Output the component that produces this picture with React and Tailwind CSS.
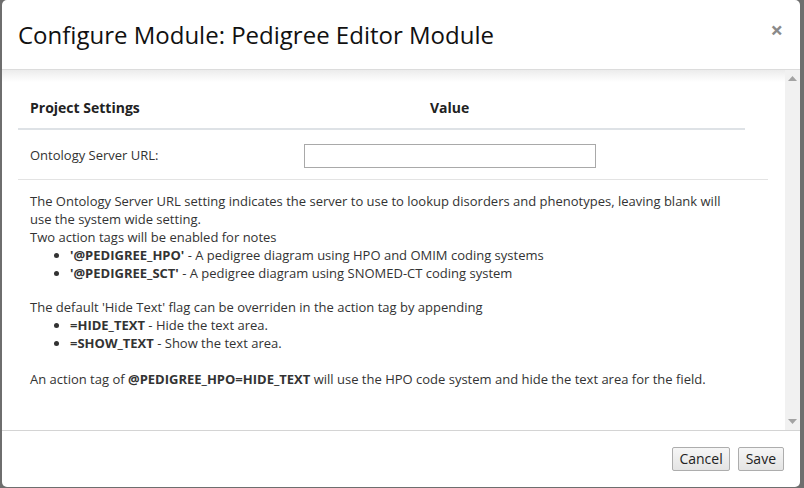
import React from 'react';

const font = { fontFamily: '"Open Sans", "Liberation Sans", sans-serif' };

const Bullet = ({ tag, children }) => (
  <li className="list-disc">
    <b className="font-bold">{tag}</b> - {children}
  </li>
);

const Scrollbar = () => (
  <div className="w-[15px] shrink-0 bg-[#f1f1f1] flex flex-col justify-between items-center py-[6px]">
    <svg width="9" height="5" viewBox="0 0 9 5">
      <path d="M0 5 L4.5 0 L9 5 Z" fill="#a3a3a3" />
    </svg>
    <svg width="9" height="5" viewBox="0 0 9 5">
      <path d="M0 0 L4.5 5 L9 0 Z" fill="#a3a3a3" />
    </svg>
  </div>
);

export default function App() {
  return (
    <div className="h-[488px] w-[804px] bg-[#6e6e6e] pl-[2px] pr-[4px] overflow-hidden" style={font}>
      <div className="h-[487px] bg-white rounded-[5px] flex flex-col overflow-hidden">
        {/* Header */}
        <div className="h-[70px] shrink-0 border-b border-[#dcdcdc] flex items-center justify-between pl-[16px] pr-[17px]">
          <h4 className="text-[24px] leading-none text-[#111]">Configure Module: Pedigree Editor Module</h4>
          <span className="text-[22px] font-bold text-[#8a8a8a] leading-none -mt-[12px]">×</span>
        </div>

        {/* Body */}
        <div className="h-[360px] shrink-0 flex relative">
          <div className="absolute left-0 right-[15px] top-0 h-[12px] bg-gradient-to-b from-[#ececec] to-white/0 pointer-events-none" />
          <div className="flex-1 pl-[16px] pt-[16px] text-[13px] text-[#333]">
            <table className="w-[727px] border-collapse">
              <thead>
                <tr className="border-b-2 border-[#dee2e6]">
                  <th className="h-[43px] text-left pl-[12px] text-[14px] font-bold text-[#222] w-[286px]">Project Settings</th>
                  <th className="text-left pl-[126px] text-[14px] font-bold text-[#222]">Value</th>
                </tr>
              </thead>
            </table>
            <div className="w-[750px] h-[50px] pt-[3px] border-b border-[#e3e3e3] flex items-center">
              <span className="pl-[12px] w-[286px] text-[13px] text-[#333]">Ontology Server URL:</span>
              <input className="w-[292px] h-[24px] border border-[#a9a9a9] bg-white" />
            </div>
            <div className="pl-[12px] pt-[12px] w-[720px] leading-[18px]">
              <p>The Ontology Server URL setting indicates the server to use to lookup disorders and phenotypes, leaving blank will use the system wide setting.</p>
              <p>Two action tags will be enabled for notes</p>
              <ul className="pl-[40px]">
                <Bullet tag="'@PEDIGREE_HPO'">A pedigree diagram using HPO and OMIM coding systems</Bullet>
                <Bullet tag="'@PEDIGREE_SCT'">A pedigree diagram using SNOMED-CT coding system</Bullet>
              </ul>
              <p className="mt-[16px]">The default 'Hide Text' flag can be overriden in the action tag by appending</p>
              <ul className="pl-[40px]">
                <Bullet tag="=HIDE_TEXT">Hide the text area.</Bullet>
                <Bullet tag="=SHOW_TEXT">Show the text area.</Bullet>
              </ul>
              <p className="mt-[18px]">
                An action tag of <b className="font-bold">@PEDIGREE_HPO=HIDE_TEXT</b> will use the HPO code system and hide the text area for the field.
              </p>
            </div>
          </div>
          <Scrollbar />
        </div>

        {/* Footer */}
        <div className="flex-1 border-t border-[#d4d4d4] flex items-center justify-end gap-[8px] pr-[16px] pb-[1px]">
          <button className="h-[24px] px-[6px] text-[14px] text-[#222] border border-[#adadad] rounded-[2px] bg-gradient-to-b from-[#f6f6f6] to-[#e4e4e4]">Cancel</button>
          <button className="h-[24px] px-[7px] text-[14px] text-[#222] border border-[#adadad] rounded-[2px] bg-gradient-to-b from-[#f6f6f6] to-[#e4e4e4]">Save</button>
        </div>
      </div>
    </div>
  );
}
